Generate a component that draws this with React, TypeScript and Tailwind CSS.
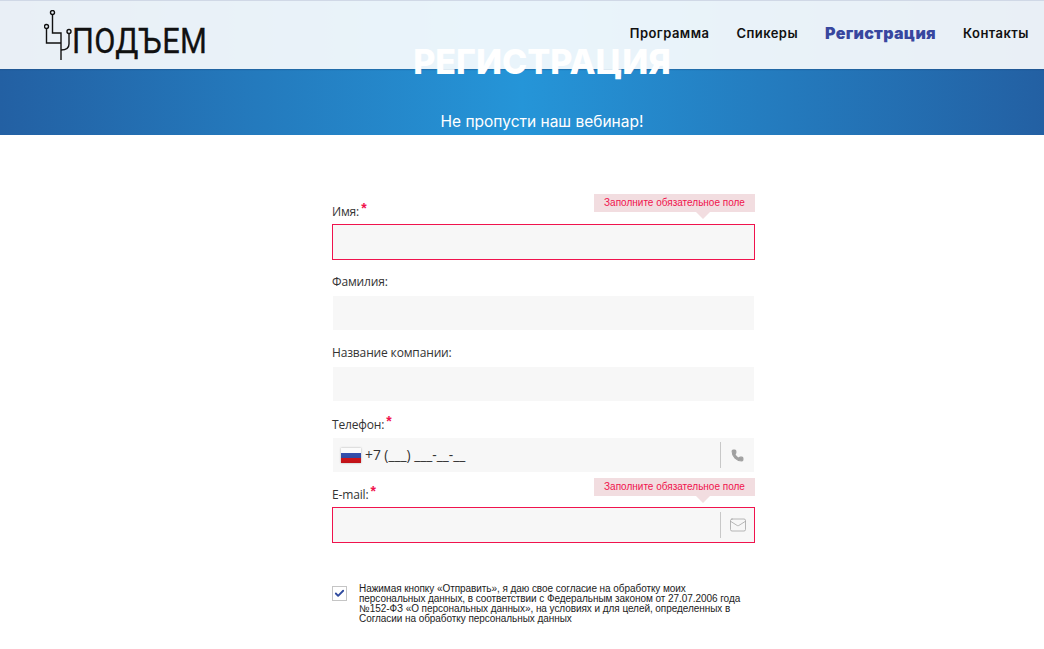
import { Check, Mail, Phone } from "lucide-react";

const navItems = [
  { label: "Программа", active: false },
  { label: "Спикеры", active: false },
  { label: "Регистрация", active: true },
  { label: "Контакты", active: false },
];

function Logo() {
  return (
    <div className="flex items-start pl-[44px] pt-[9px]">
      <svg width="29" height="52" viewBox="0 0 29 52" fill="none" stroke="#111" strokeWidth="1.4" className="shrink-0">
        <circle cx="8.5" cy="2.5" r="2" />
        <circle cx="2.5" cy="16.5" r="2" />
        <circle cx="25" cy="21.5" r="2" />
        <path d="M8.5 4.5V23H17V50" />
        <path d="M2.5 18.5V33H17" />
        <path d="M25 23.5V34Q25 40 17 40" />
      </svg>
      <span className="-ml-[1px] mt-[12px] origin-left scale-x-[0.88] whitespace-nowrap font-['Roboto',sans-serif] text-[35px] leading-[40px] tracking-[0.3px] text-[#111] [-webkit-text-stroke:0.3px_#111]">
        ПОДЪЕМ
      </span>
    </div>
  );
}

function Hint({ className }: { className: string }) {
  return (
    <div className={`absolute right-[-1px] h-[18px] w-[161px] bg-[#f2dde0] text-center font-['Liberation_Sans',sans-serif] text-[10px] leading-[18px] text-[#f0134d] ${className}`}>
      Заполните обязательное поле
      <span className="absolute left-[102px] top-[18px] h-0 w-0 border-x-[7px] border-t-[7px] border-x-transparent border-t-[#f2dde0]" />
    </div>
  );
}

type FieldProps = {
  label: string;
  required?: boolean;
  hint?: string;
  divider?: React.ReactNode;
  children?: React.ReactNode;
  className?: string;
};

function Field({ label, required, hint, divider, children, className = "" }: FieldProps) {
  return (
    <div className={className}>
      <div className={`flex h-[35px] items-end text-[12px] leading-[18px] tracking-[-0.15px] text-[#333] ${required ? "pb-[3px]" : "pb-[4px]"}`}>
        {label}
        {required && (
          <span className="relative -top-[6px] ml-[2px] font-['Liberation_Sans',sans-serif] text-[14px] font-bold leading-[14px] text-[#f0134d]">
            *
          </span>
        )}
      </div>
      <div className={`relative flex h-[36px] items-center border bg-[#f7f7f7] ${hint ? "border-[#f0134d]" : "border-white"}`}>
        {hint && <Hint className={hint} />}
        {children}
        {divider && (
          <div className="ml-auto flex h-[26px] w-[34px] items-center justify-center border-l border-[#c8c8c8]">
            {divider}
          </div>
        )}
      </div>
    </div>
  );
}

export default function App() {
  return (
    <div className="h-[649px] overflow-hidden bg-white font-['Open_Sans',sans-serif]">
      {/* Шапка */}
      <section className="relative flex h-[135px] flex-col items-center bg-[linear-gradient(90deg,#2360a3_0%,#2595d8_50%,#2360a3_100%)] pl-[40px] text-white">
        <header className="absolute inset-x-0 top-0 flex h-[69px] items-start justify-between border-t border-[#d0d8e6] bg-white/90 shadow-[0_1px_1px_rgba(30,70,120,0.35)]">
          <Logo />
          <nav className="flex items-center gap-[27px] pr-[15px] pt-[24px] font-['Inter',sans-serif] text-[13px] leading-[16px] text-[#111]">
            {navItems.map((item) => (
              <a
                key={item.label}
                className={
                  item.active
                    ? "text-[16px] font-black tracking-[0.3px] text-[#38479f]"
                    : "font-semibold tracking-[0.45px]"
                }
              >
                {item.label}
              </a>
            ))}
          </nav>
        </header>
        <h1 className="relative mt-[41px] font-['Inter',sans-serif] text-[34px] font-extrabold leading-[42px]">
          РЕГИСТРАЦИЯ
        </h1>
        <p className="relative mt-[28px] font-['Inter',sans-serif] text-[15.5px] leading-[22px]">Не пропусти наш вебинар!</p>
      </section>

      {/* Форма */}
      <form className="ml-[332px] w-[423px] pt-[54px]">
        <Field label="Имя:" required hint="top-[-31px]" />
        <Field label="Фамилия:" />
        <Field label="Название компании:" />
        <Field label="Телефон:" required divider={<Phone size={13} fill="#a0a0a0" stroke="#a0a0a0" />}>
          <svg width="20" height="15" viewBox="0 0 20 15" className="ml-[8px] shrink-0 shadow-[0_0_2px_rgba(0,0,0,0.3)]">
            <defs>
              <linearGradient id="flagShade" x1="0" y1="0" x2="0" y2="1">
                <stop offset="0.3" stopColor="#000" stopOpacity="0" />
                <stop offset="1" stopColor="#000" stopOpacity="0.15" />
              </linearGradient>
            </defs>
            <rect width="20" height="5" fill="#fbfbfb" />
            <rect y="5" width="20" height="5" fill="#3550b0" />
            <rect y="10" width="20" height="5" fill="#e0161c" />
            <rect width="20" height="15" fill="url(#flagShade)" />
          </svg>
          <span className="ml-[4px] text-[13.8px] text-[#333]">+7 (___) ___-__-__</span>
        </Field>
        <Field label="E-mail:" required hint="top-[-30px]" className="-mt-px" divider={<Mail size={18} strokeWidth={1} stroke="#a0a0a0" />} />

        <div className="mt-[41px] flex">
          <div className="mt-[2px] flex h-[15px] w-[15px] shrink-0 items-center justify-center border border-[#c5c5c5] bg-white">
            <Check size={11} strokeWidth={4} className="text-[#2f4a9e]" />
          </div>
          <p className="ml-[12px] w-[390px] font-['Liberation_Sans',sans-serif] text-[10px] leading-[10px] tracking-[-0.06px] text-[#222]">
            Нажимая кнопку «Отправить», я даю свое согласие на обработку моих персональных данных, в соответствии с
            Федеральным законом от 27.07.2006 года №152-ФЗ «О персональных данных», на условиях и для целей,
            определенных в Согласии на обработку персональных данных
          </p>
        </div>
      </form>
    </div>
  );
}
